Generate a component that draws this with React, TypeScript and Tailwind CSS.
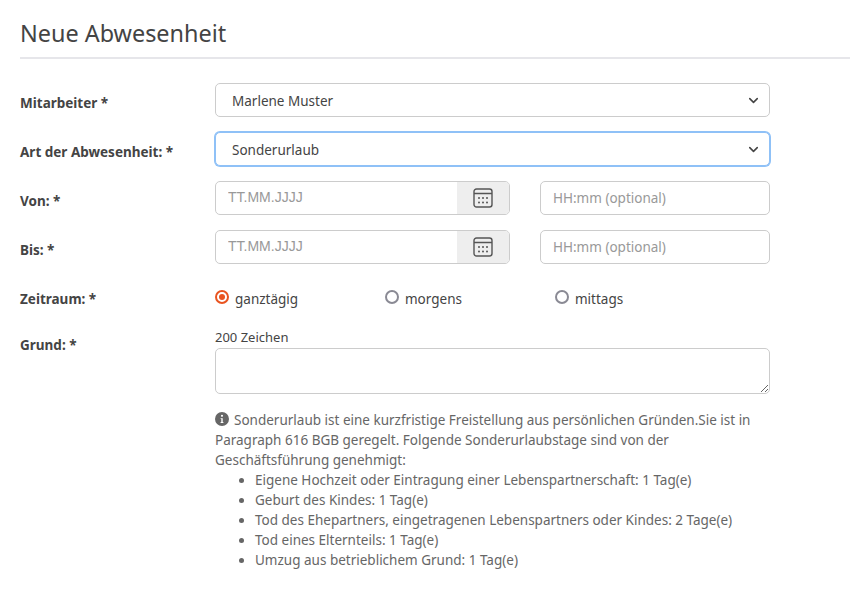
import { ChevronDown } from 'lucide-react';

const font = { fontFamily: '"Noto Sans", sans-serif' };

function CalendarIcon() {
  return (
    <svg width="20" height="20" viewBox="0 0 20 20" fill="none" className="text-[#555]">
      <rect x="1" y="1" width="18" height="18" rx="2.5" stroke="currentColor" strokeWidth="1.4" />
      <path d="M1 5.5h18" stroke="currentColor" strokeWidth="1.4" />
      <g fill="currentColor">
        <circle cx="6" cy="10" r="1" />
        <circle cx="10" cy="10" r="1" />
        <circle cx="14" cy="10" r="1" />
        <circle cx="6" cy="14.5" r="1" />
        <circle cx="10" cy="14.5" r="1" />
        <circle cx="14" cy="14.5" r="1" />
      </g>
    </svg>
  );
}

function Label({ text, className }: { text: string; className: string }) {
  return <div className={`w-[195px] shrink-0 text-[13.5px] font-bold text-[#444] ${className}`}>{text}</div>;
}

function SelectBox({ value, focused }: { value: string; focused?: boolean }) {
  return (
    <div
      className={`w-[555px] h-[34px] rounded-[5px] bg-white flex items-center justify-between pl-[16px] pr-[8px] text-[13.5px] text-[#444] ${
        focused ? 'border border-[#8fc1f7] ring-1 ring-[#8fc1f7]' : 'border border-[#ccc]'
      }`}
    >
      <span className="pt-[2px]">{value}</span>
      <ChevronDown size={15} strokeWidth={2.5} className="text-[#444]" />
    </div>
  );
}

function DateRow({ label }: { label: string }) {
  return (
    <div className="flex mb-[15px]">
      <Label text={label} className="pt-[10px]" />
      <div className="flex w-[295px] h-[34px] rounded-[5px] border border-[#ccc] overflow-hidden">
        <input
          placeholder="TT.MM.JJJJ"
          className="w-[241px] pl-[12px] pb-[2px] text-[14px] outline-none placeholder:text-[#999]"
          style={{ fontFamily: '"Liberation Sans", sans-serif' }}
        />
        <div className="flex-1 bg-[#eee] flex items-center justify-center">
          <CalendarIcon />
        </div>
      </div>
      <input
        placeholder="HH:mm (optional)"
        className="ml-[30px] w-[230px] h-[34px] rounded-[5px] border border-[#ccc] px-[12px] text-[13.5px] outline-none placeholder:text-[#999]"
      />
    </div>
  );
}

function Radio({ label, checked, width }: { label: string; checked?: boolean; width: string }) {
  return (
    <div className={`flex items-center gap-[6px] ${width}`}>
      <span
        className={`w-[14px] h-[14px] rounded-full border-2 bg-white flex items-center justify-center mb-[3px] ${
          checked ? 'border-[#e95420]' : 'border-[#8a8a94]'
        }`}
      >
        {checked && <span className="w-[6px] h-[6px] rounded-full bg-[#e95420]" />}
      </span>
      <span className="pt-[2px] text-[13.5px] text-[#444]">{label}</span>
    </div>
  );
}

const items = [
  'Eigene Hochzeit oder Eintragung einer Lebenspartnerschaft: 1 Tag(e)',
  'Geburt des Kindes: 1 Tag(e)',
  'Tod des Ehepartners, eingetragenen Lebenspartners oder Kindes: 2 Tage(e)',
  'Tod eines Elternteils: 1 Tag(e)',
  'Umzug aus betrieblichem Grund: 1 Tag(e)',
];

export default function App() {
  return (
    <div className="w-[850px] h-[600px] bg-white overflow-hidden pl-5 pt-[17px]" style={font}>
      {/* Header */}
      <h1 className="text-[23.4px] leading-[33px] text-[#444] pb-[7px] border-b-2 border-[#e6e6ea] mb-[24px]">
        Neue Abwesenheit
      </h1>

      <div className="flex mb-[15px]">
        <Label text="Mitarbeiter *" className="pt-[10px]" />
        <SelectBox value="Marlene Muster" />
      </div>
      <div className="flex mb-[15px]">
        <Label text="Art der Abwesenheit: *" className="pt-[10px]" />
        <SelectBox value="Sonderurlaub" focused />
      </div>

      <DateRow label="Von: *" />
      <DateRow label="Bis: *" />

      {/* Zeitraum */}
      <div className="flex items-center h-[20px] mt-[24px] mb-[20px]">
        <Label text="Zeitraum: *" className="pt-[2px]" />
        <Radio label="ganztägig" checked width="w-[170px]" />
        <Radio label="morgens" width="w-[170px]" />
        <Radio label="mittags" width="w-[170px]" />
      </div>

      {/* Grund */}
      <div className="flex">
        <Label text="Grund: *" className="pt-[7px]" />
        <div className="w-[555px]">
          <div className="text-[13px] leading-[18px] text-[#444] mb-[2px]">200 Zeichen</div>
          <textarea className="block w-full h-[46px] rounded-[5px] border border-[#ccc] outline-none" />
          <div className="mt-[16px] text-[13.5px] leading-[20px] text-[#666]">
            <svg width="14" height="14" viewBox="0 0 16 16" className="inline-block mr-[5px] mb-[4px] text-[#666]" fill="currentColor">
              <path d="M8 0a8 8 0 1 0 0 16A8 8 0 0 0 8 0zm0 3.2a1.2 1.2 0 1 1 0 2.4 1.2 1.2 0 0 1 0-2.4zM9.6 12.5H6.4v-1h.8V8H6.4V7h2.4v4.5h.8v1z" />
            </svg>
            Sonderurlaub ist eine kurzfristige Freistellung aus persönlichen Gründen.Sie ist in Paragraph 616 BGB geregelt. Folgende Sonderurlaubstage sind von der Geschäftsführung genehmigt:
            <ul className="list-disc pl-[40px]">
              {items.map((item) => (
                <li key={item}>{item}</li>
              ))}
            </ul>
          </div>
        </div>
      </div>
    </div>
  );
}
